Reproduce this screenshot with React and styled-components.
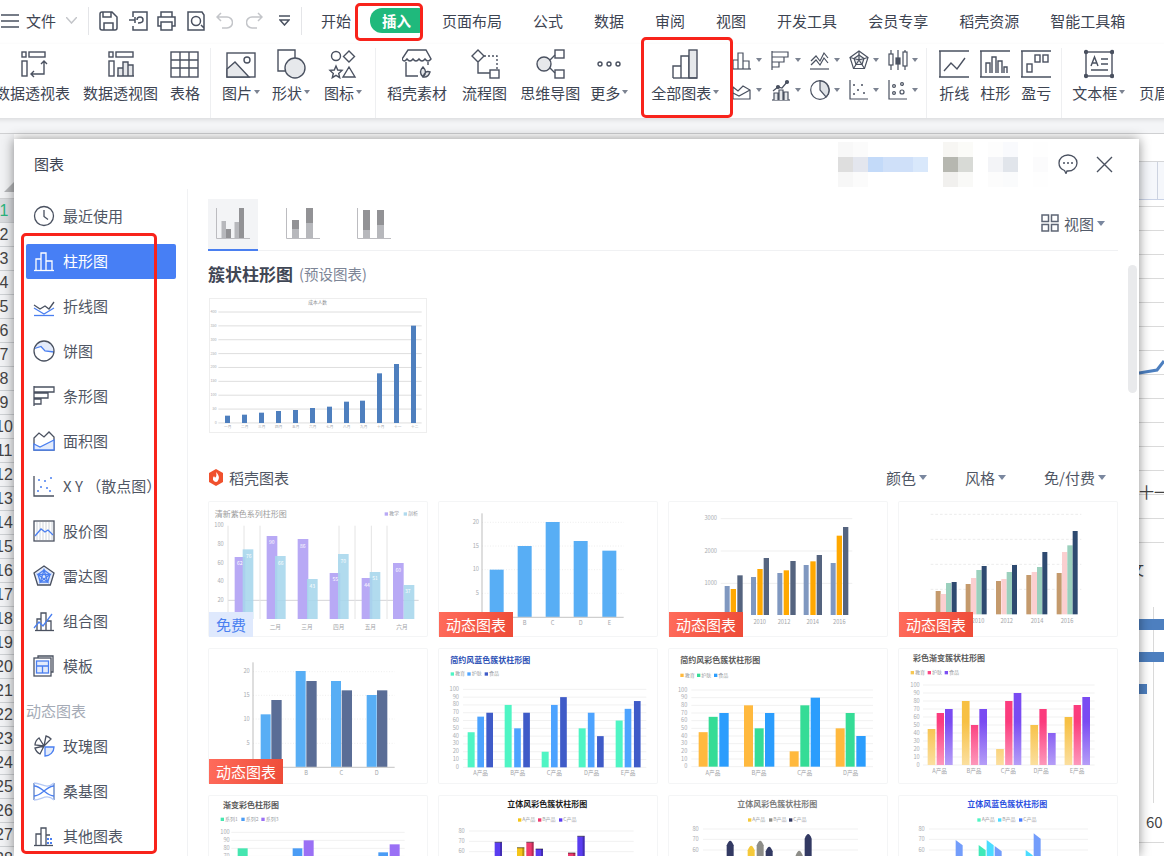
import React from 'react';
import styled, { createGlobalStyle } from 'styled-components';

const ink = '#4a5160';
const blue = '#4a7ff0';
const text = '#3d4452';

const GlobalStyle = createGlobalStyle`
  html, body {
    margin: 0;
    padding: 0;
    width: 1164px;
    height: 856px;
    overflow: hidden;
    background: white;
    font-family: "Noto Sans CJK SC", "Liberation Sans", sans-serif;
    color: ${text};
  }
  * { box-sizing: border-box; }
`;

const Page = styled.div`
  position: relative;
  width: 1164px;
  height: 856px;
  overflow: hidden;
  display: flex;
  flex-direction: column;
`;

/* ---------- top tabs ---------- */
const TabBar = styled.div`
  height: 44px;
  flex: none;
  display: flex;
  align-items: center;
  padding: 0 0 3px 1px;
  background: white;
  font-size: 15px;
  white-space: nowrap;
`;

const FileLabel = styled.span`
  margin-left: 7px;
`;

const VDivider = styled.div`
  width: 1px;
  height: ${p => p.$h || 28}px;
  background: #e4e5e8;
  flex: none;
  margin-left: ${p => p.$ml || 0}px;
`;

const QuickIcon = styled.svg`
  flex: none;
  margin-left: ${p => p.$ml}px;
  fill: none;
  stroke: ${p => p.$off ? '#c3c5c9' : ink};
  stroke-width: 1.5;
`;

const Tabs = styled.div`
  display: flex;
  align-items: center;
  gap: 31px;
  margin-left: 19px;
`;

const Tab = styled.span`
  ${p => p.$active && `
    background: #1fb97c;
    color: white;
    font-weight: 700;
    height: 25px;
    line-height: 25px;
    padding: 0 12px;
    margin: 0 -12px;
    border-radius: 12px 4px 4px 12px;
    font-size: 14.5px;
  `}
`;

/* ---------- ribbon ---------- */
const Ribbon = styled.div`
  height: 74px;
  flex: none;
  display: flex;
  background: white;
  box-shadow: 0 2px 4px rgba(0, 0, 0, .1);
  position: relative;
  z-index: 1;
  margin-left: -5px;
  width: 1180px;
`;

const Tool = styled.div`
  flex: none;
  margin-left: ${p => p.$ml || 0}px;
  display: flex;
  flex-direction: column;
  align-items: center;
  padding-top: 5px;
  font-size: 15px;
  white-space: nowrap;
`;

const ToolIcon = styled.svg`
  display: block;
  fill: none;
  stroke: ${ink};
  stroke-width: 1.4;
`;

const ToolLabel = styled.div`
  display: flex;
  align-items: center;
  height: 20px;
  margin-top: 3px;
`;

const Caret = styled.i`
  display: inline-block;
  flex: none;
  margin-left: ${p => p.$ml ?? 2}px;
  border-style: solid;
  border-width: ${p => p.$big ? '5px 4px 0' : '4px 3.5px 0'};
  border-color: ${p => p.$big ? '#7a879f' : '#7c8391'} transparent transparent;
`;

const RibbonDivider = styled.div`
  flex: none;
  width: 1px;
  height: 70px;
  margin: 4px 0 0 ${p => p.$ml}px;
  background: #eeeff1;
`;

const MiniGrid = styled.div`
  flex: none;
  width: 195px;
  margin-left: 13px;
  padding-top: 1px;
  display: grid;
  grid-template-columns: repeat(5, 39px);
  grid-auto-rows: 30px;
`;

const MiniCell = styled.div`
  display: flex;
  align-items: center;
`;

const Band = styled.div`
  height: 15px;
  flex: none;
  background: #f4f5f7;
`;

/* ---------- sheet behind the dialog ---------- */
const Sheet = styled.div`
  position: relative;
  flex: 1;
  display: flex;
  background: white;
  border-top: 1px solid #cfd0d2;
`;

const RowHeader = styled.div`
  width: 14px;
  flex: none;
  background: #f1f2f4;
`;

const Corner = styled.div`
  height: 65px;
  display: flex;
  justify-content: flex-end;
  align-items: flex-end;
  padding-bottom: 6px;
  border-bottom: 1px solid #cfd0d2;
`;

const CornerMark = styled.i`
  border-style: solid;
  border-width: 0 0 10px 10px;
  border-color: transparent transparent #b4b5b8;
`;

const RowNum = styled.div`
  height: 24px;
  padding-right: 6px;
  display: flex;
  justify-content: center;
  align-items: center;
  border-bottom: 1px solid #cdd0d3;
  font-family: "Liberation Sans", sans-serif;
  font-size: 16px;
  white-space: nowrap;
  color: ${p => p.$on ? '#2bb37c' : '#444'};
  background: ${p => p.$on ? '#d9dbde' : 'transparent'};
`;

const SheetBody = styled.div`
  flex: 1;
  display: flex;
  flex-direction: column;
`;

const ColHead = styled.div`
  height: 65px;
  flex: none;
  padding-top: 27px;
`;

const ColHeadCells = styled.div`
  height: 39px;
  background: #f5f7fb;
  border-top: 1px solid #d5d6d8;
  border-bottom: 1px solid #c9d2e6;
  background-image: linear-gradient(#cdd3e0, #cdd3e0);
  background-size: 1px 100%;
  background-position: 1143px 0;
  background-repeat: no-repeat;
`;

const GridRows = styled.div`
  height: 346px;
  flex: none;
  background-image: linear-gradient(to bottom, transparent 23px, #dadada 23px);
  background-size: 100% 24px;
  background-position: 0 8px;
`;

const Bg = styled.div`
  position: absolute;
  left: ${p => p.$x}px;
  top: ${p => p.$y - 134}px;
  width: ${p => p.$w ? `${p.$w}px` : 'auto'};
  height: ${p => p.$h ? `${p.$h}px` : 'auto'};
  background: ${p => p.$c || 'transparent'};
  font-size: 15px;
  white-space: nowrap;
  color: #444;
`;

const SheetLine = styled.svg`
  position: absolute;
  left: 1139px;
  top: 221px;
  fill: none;
`;

/* ---------- dialog ---------- */
const Dialog = styled.div`
  position: absolute;
  left: 14px;
  top: 139px;
  width: 1125px;
  height: 717px;
  z-index: 2;
  overflow: hidden;
  background: white;
`;

const DialogShadow = styled.div`
  position: absolute;
  left: 14px;
  top: 139px;
  width: 1125px;
  height: 717px;
  z-index: 2;
  box-shadow: 0 0 11px rgba(0, 0, 0, .45);
`;

const DialogHeader = styled.div`
  height: 50px;
  display: flex;
  align-items: center;
  padding: 0 26px 0 20px;
  font-size: 15px;
`;

const DialogTitle = styled.span`
  padding-bottom: 2px;
`;

const Mosaic = styled.div`
  margin-left: auto;
  display: grid;
  grid-template-columns: repeat(14, 15px);
  grid-auto-rows: 15px;
`;

const Pixel = styled.i`
  display: block;
  background: ${p => p.$c};
`;

const HeaderIcon = styled.svg`
  flex: none;
  margin-left: ${p => p.$ml}px;
  fill: none;
  stroke: ${ink};
`;

const DialogBody = styled.div`
  display: flex;
  height: 667px;
`;

const Sidebar = styled.div`
  width: 174px;
  flex: none;
  padding: 10px 0 0 12px;
  display: flex;
  flex-direction: column;
  gap: 10px;
  border-right: 1px solid #f1f2f4;
`;

const SideItem = styled.div`
  width: 150px;
  height: 35px;
  flex: none;
  display: flex;
  align-items: center;
  gap: 8px;
  padding: 0 0 2px 7px;
  border-radius: 2px;
  font-size: 15px;
  white-space: nowrap;
  color: ${p => p.$active ? 'white' : '#4f5664'};
  background: ${p => p.$active ? '#477ff5' : 'transparent'};
`;

const SideIcon = styled.svg`
  flex: none;
  fill: none;
  stroke: ${p => p.$active ? 'white' : ink};
  stroke-width: 1.3;
`;

const SideGroup = styled.div`
  height: 35px;
  flex: none;
  line-height: 33px;
  margin-bottom: -10px;
  font-size: 15px;
  color: #a5abb6;
`;

const Main = styled.div`
  flex: 1;
  min-width: 0;
  padding: 10px 21px 0 20px;
`;

const TypeTabs = styled.div`
  height: 52px;
  display: flex;
  border-bottom: 1px solid #f0f1f3;
  padding-right: 13px;
`;

const TypeTab = styled.div`
  width: 50px;
  height: 52px;
  margin-right: ${p => p.$mr || 0}px;
  padding-top: 9px;
  display: flex;
  justify-content: center;
  background: ${p => p.$active ? '#f3f4f6' : 'transparent'};
  border-bottom: 2px solid ${p => p.$active ? blue : 'transparent'};
`;

const ViewSwitch = styled.div`
  margin-left: auto;
  height: 48px;
  display: flex;
  align-items: center;
  gap: 5px;
  font-size: 15px;
  color: #535b6a;
`;

const Heading = styled.div`
  margin-top: 10px;
  height: 24px;
  display: flex;
  align-items: center;
  gap: 6px;
  font-size: 17px;
  font-weight: 700;
  color: #3f4654;
`;

const HeadingNote = styled.span`
  font-size: 14.5px;
  font-weight: 400;
  color: #7d8596;
`;

const Preview = styled.div`
  margin: 13px 0 0 1px;
  width: 218px;
  height: 135px;
  box-shadow: inset 0 0 0 1px #eeeeee;
`;

const SectionBar = styled.div`
  margin-top: 33px;
  height: 24px;
  display: flex;
  align-items: center;
  font-size: 15px;
  color: #4f5664;
  padding: 0 12px 2px 0;
`;

const SectionTitle = styled.span`
  margin-left: 5px;
  margin-right: auto;
`;

const Filter = styled.span`
  display: flex;
  align-items: center;
  margin-left: 38px;
`;

const CardGrid = styled.div`
  margin-top: 11px;
  display: grid;
  grid-template-columns: repeat(4, 220px);
  grid-auto-rows: 136px;
  column-gap: 10px;
  row-gap: 11px;
`;

const Card = styled.div`
  position: relative;
  box-shadow: inset 0 0 0 1px #f4f5f6;
  border-radius: 2px;
`;

const Badge = styled.span`
  position: absolute;
  left: 1px;
  bottom: 0;
  height: 25px;
  line-height: 25px;
  text-align: center;
  font-size: 15px;
  ${p => p.$free
    ? `width: 44px; background: #dfe9fd; color: ${blue};`
    : 'width: 74px; color: white; background: linear-gradient(100deg, #ff6b5b, #ee4c38);'}
`;

const ChartSvg = styled.svg`
  display: block;
  font-family: "Noto Sans CJK SC", "Liberation Sans", sans-serif;
`;

const Scrollbar = styled.div`
  position: absolute;
  left: 1114px;
  top: 126px;
  width: 9px;
  height: 128px;
  border-radius: 5px;
  background: #e9eaec;
`;

const Frame = styled.div`
  position: absolute;
  z-index: 3;
  left: ${p => p.$x}px;
  top: ${p => p.$y}px;
  width: ${p => p.$w}px;
  height: ${p => p.$h}px;
  border: 3px solid #f8231b;
  border-radius: 5px;
`;

/* ---------- charts ---------- */
const col = (xs, w, tops, c, shape) => xs.map((x, i) => ({ x, w, t: tops[i], c, shape }));
const range = (start, step, n) => Array.from({ length: n }, (_, i) => start + i * step);
const vals = (base, k, list) => list.map(v => base - v * k);

const Bar = ({ b, base }) => {
  const h = base - b.t;
  if (b.shape === '3d') {
    return (
      <g>
        <rect x={b.x} y={b.t} width={b.w} height={h} fill={b.c} />
        <rect x={b.x + b.w - 6} y={b.t} width={6} height={h} fill="#000" opacity=".25" />
        <rect x={b.x} y={b.t - 2} width={b.w} height={4} fill="#000" opacity=".4" />
      </g>
    );
  }
  if (b.shape === 'bullet') {
    return <path d={`M${b.x} ${base}V${b.t + 16}Q${b.x + b.w / 2} ${b.t - 12} ${b.x + b.w} ${b.t + 16}V${base}Z`} fill={b.c} />;
  }
  if (b.shape === 'slant') {
    return <path d={`M${b.x} ${base}V${b.t}L${b.x + b.w} ${b.t + 16}V${base}Z`} fill={b.c} />;
  }
  return <rect x={b.x} y={b.t} width={b.w} height={h} fill={b.c} />;
};

const Chart = ({ box, size = [220, 136], title, legend = [], yTicks = [], yx, grid, vGrid = [], axisX, bars, base, xLabels = [], xy, tag, barText = [] }) => (
  <ChartSvg width={size[0]} height={size[1]} viewBox={`${box[0]} ${box[1]} ${size[0] * 3} ${size[1] * 3}`}>
    <defs>
      <linearGradient id="gy" gradientUnits="userSpaceOnUse" x1="0" y1="230" x2="0" y2="360"><stop offset="0" stopColor="#f7c043" /><stop offset="1" stopColor="#fbdf9f" /></linearGradient>
      <linearGradient id="gp" gradientUnits="userSpaceOnUse" x1="0" y1="230" x2="0" y2="360"><stop offset="0" stopColor="#fb3c7d" /><stop offset="1" stopColor="#fd98bb" /></linearGradient>
      <linearGradient id="gv" gradientUnits="userSpaceOnUse" x1="0" y1="230" x2="0" y2="360"><stop offset="0" stopColor="#7a4bf2" /><stop offset="1" stopColor="#b59ef7" /></linearGradient>
    </defs>
    {grid && grid.ys.map(y => (
      <line key={y} x1={grid.x1} x2={grid.x2} y1={y} y2={y} stroke={grid.c || '#f1f1f1'} strokeWidth={grid.sw || 3} strokeDasharray={grid.dash} />
    ))}
    {vGrid.map(x => <line key={x} x1={x} x2={x} y1={92} y2={372} stroke="#e4e4e4" strokeWidth="3" />)}
    {axisX && <line x1={axisX[0]} x2={axisX[0]} y1={axisX[1]} y2={base} stroke="#bdbdbd" strokeWidth="3" />}
    {title && (
      <text x={title.x} y={title.y} fill={title.c} fontSize={title.fs || 24} fontWeight={title.w || 400} textAnchor={title.a || 'start'} dominantBaseline="middle">{title.t}</text>
    )}
    {legend.map(l => (
      <g key={l.x}>
        <rect x={l.x} y={l.y - 5} width="10" height="10" fill={l.c} />
        <text x={l.x + 13} y={l.y} fontSize="15" fill="#9a9da3" dominantBaseline="middle">{l.t}</text>
      </g>
    ))}
    {yTicks.map(([t, y]) => (
      <text key={t} x={yx} y={y} fontSize={tag === 'preview' ? 11 : 17} fill="#a9acb1" textAnchor="end" dominantBaseline="middle">{t}</text>
    ))}
    {bars.map((b, i) => <Bar key={i} b={b} base={base} />)}
    {barText.map(([t, x, y]) => (
      <text key={`${t}${x}`} x={x} y={y} fontSize="15" fill="white" textAnchor="middle" dominantBaseline="middle">{t}</text>
    ))}
    {xLabels.map(([t, x]) => (
      <text key={t} x={x} y={xy} fontSize={tag === 'preview' ? 11 : 17} fill="#a3a5a9" textAnchor="middle" dominantBaseline="middle">{t}</text>
    ))}
    {tag === 'axis' && <line x1={axisX[0]} x2={grid.x2} y1={base} y2={base} stroke="#cfcfcf" strokeWidth="4" />}
  </ChartSvg>
);

const ticks = (list, start, step) => list.map((t, i) => [t, start + i * step]);
const hundred = [100, 90, 80, 70, 60, 50, 40, 30, 20, 10, 0];

const previewChart = {
  box: [57, 325],
  size: [218, 135],
  title: { x: 383, y: 340, t: '成本人数', c: '#8b8d92', fs: 14, a: 'middle' },
  grid: { x1: 85, x2: 695, ys: range(367, 41.6, 9), c: '#dedede', sw: 3 },
  yTicks: ticks([400, 350, 300, 250, 200, 150, 100, 50, 0], 367, 41.6),
  yx: 80,
  tag: 'preview',
  base: 700,
  bars: col(range(105, 51, 8).concat([510, 561, 612, 663]), 15, [678, 675, 669, 664, 661, 655, 651, 636, 633, 551, 523, 408], '#4e7fbe'),
  xLabels: ['一月', '二月', '三月', '四月', '五月', '六月', '七月', '八月', '九月', '十月', '十一', '十二'].map((t, i) => [t, 113 + i * 51]),
  xy: 712,
};

const cards = [
  {
    badge: 'free',
    chart: {
      box: [25, 18],
      title: { x: 45, y: 60, t: '清新紫色系列柱形图', c: '#9c9c9c' },
      legend: [{ x: 555, y: 57, c: '#b8a9f5', t: '教学' }, { x: 612, y: 57, c: '#b0daee', t: '剖析' }],
      yTicks: ticks([100, 80, 60, 40, 20], 92, 56),
      yx: 72,
      vGrid: [85, 133, 181, 418, 466, 515, 562],
      grid: { x1: 85, x2: 657, ys: [316], c: '#d4d4d8' },
      base: 372,
      bars: [
        ...col([105, 201, 294, 390, 486, 580], 32, [186, 123, 132, 234, 249, 204], '#b8a9f5'),
        ...col([129, 226, 322, 415, 510, 612], 32, [163, 183, 252, 177, 231, 270], 'rgba(166, 214, 236, .88)'),
      ],
      barText: [['62', 120, 207], ['76', 147, 186], ['90', 216, 144], ['66', 243, 205], ['86', 309, 156], ['43', 338, 274], ['55', 407, 255], ['70', 431, 199], ['44', 502, 272], ['51', 526, 252], ['60', 596, 228], ['37', 624, 291]],
      xLabels: [['二月', 227], ['三月', 322], ['四月', 417], ['五月', 512], ['六月', 607]],
      xy: 398,
    },
  },
  {
    badge: 'dyn',
    chart: {
      box: [715, 18],
      axisX: [847, 55],
      grid: { x1: 847, x2: 1272, ys: [82, 153, 224, 295], dash: '3 5', c: '#e6e6e6', sw: 2 },
      tag: 'axis',
      yTicks: ticks([20, 15, 10, 5], 82, 71),
      yx: 838,
      base: 367,
      bars: col([870, 954, 1038, 1122, 1208], 42, [224, 153, 81, 138, 167], '#58aef5'),
      xLabels: [['B', 975], ['C', 1059], ['D', 1143], ['E', 1229]],
      xy: 386,
    },
  },
  {
    badge: 'dyn',
    chart: {
      box: [25, 18],
      grid: { x1: 183, x2: 578, ys: [71, 168, 265], c: '#efefef' },
      yTicks: ticks([3000, 2000, 1000], 71, 97),
      yx: 172,
      base: 360,
      bars: [
        ...col([195, 274, 353, 432, 513], 15, [273, 246, 234, 210, 204], '#8098c0'),
        ...col([213, 293, 372, 452, 531], 16, [282, 222, 226, 199, 122], '#ffa800'),
        ...col([233, 312, 392, 471, 550], 16, [241, 189, 198, 180, 96], '#55647f'),
      ],
      xLabels: [['2010', 300], ['2012', 373], ['2014', 459], ['2016', 539]],
      xy: 383,
    },
  },
  {
    badge: 'dyn',
    chart: {
      box: [715, 18],
      grid: { x1: 813, x2: 1265, ys: [58, 133, 208, 283], dash: '8 6', c: '#ececec' },
      base: 358,
      bars: [
        ...col([828, 918, 1009, 1100, 1191], 15, [288, 267, 258, 240, 234], '#c49a6c'),
        ...col([843, 934, 1025, 1116, 1207], 16, [297, 249, 252, 231, 171], '#fbcfd0'),
        ...col([859, 950, 1041, 1132, 1223], 16, [264, 225, 231, 216, 151], '#9bd0bd'),
        ...col([876, 966, 1057, 1148, 1239], 15, [261, 213, 210, 171, 108], '#2e4a70'),
      ],
      xLabels: [['2010', 955], ['2012', 1041], ['2014', 1132], ['2016', 1222]],
      xy: 380,
    },
  },
  {
    badge: 'dyn',
    chart: {
      box: [25, 9],
      axisX: [160, 52],
      grid: { x1: 160, x2: 585, ys: [80, 151, 222, 295], dash: '3 5', c: '#e6e6e6', sw: 2 },
      tag: 'axis',
      yTicks: ticks([20, 15, 10, 5], 80, 71.5),
      yx: 150,
      base: 367,
      bars: [
        ...col([183, 288, 394, 501], 30, [208, 78, 108, 150], '#58aef5'),
        ...col([215, 320, 426, 532], 31, [165, 108, 136, 136], '#5a6d96'),
      ],
      xLabels: [['B', 319], ['C', 425], ['D', 531]],
      xy: 386,
    },
  },
  {
    chart: {
      box: [715, 9],
      title: { x: 752, y: 47, t: '简约风蓝色簇状柱形图', c: '#2b4fb5', w: 700 },
      legend: [{ x: 753, y: 87, c: '#4ff5c4', t: '教育' }, { x: 803, y: 87, c: '#4da3ff', t: '护肤' }, { x: 855, y: 87, c: '#3f5bc8', t: '食品' }],
      grid: { x1: 790, x2: 1340, ys: range(133, 23.4, 11) },
      yTicks: ticks(hundred, 133, 23.4),
      yx: 778,
      base: 367,
      bars: [
        ...col(range(804, 111, 5), 21, vals(367, 2.34, [45, 80, 20, 50, 60]), '#4ff5c4'),
        ...col(range(833, 110.5, 5), 20, vals(367, 2.34, [65, 50, 80, 70, 75]), '#4da3ff'),
        ...col(range(860, 110.7, 5), 20, vals(367, 2.34, [70, 70, 90, 40, 85]), '#3f5bc8'),
      ],
      xLabels: [['A产品', 843], ['B产品', 954], ['C产品', 1064], ['D产品', 1176], ['E产品', 1285]],
      xy: 385,
    },
  },
  {
    chart: {
      box: [25, 9],
      title: { x: 62, y: 47, t: '简约风彩色簇状柱形图', c: '#5a5a5a', w: 700 },
      legend: [{ x: 62, y: 91, c: '#ffb93e', t: '教育' }, { x: 112, y: 91, c: '#35dc96', t: '护肤' }, { x: 163, y: 91, c: '#2b9dfd', t: '食品' }],
      grid: { x1: 95, x2: 640, ys: range(135, 23, 11) },
      yTicks: ticks(hundred, 135, 23),
      yx: 83,
      base: 365,
      bars: [
        ...col([117, 253, 390, 528], 27, vals(365, 2.3, [45, 80, 20, 50]), '#ffb93e'),
        ...col([147, 285, 422, 558], 27, vals(365, 2.3, [65, 50, 80, 70]), '#35dc96'),
        ...col([179, 316, 453, 590], 28, vals(365, 2.3, [70, 70, 90, 40]), '#2b9dfd'),
      ],
      xLabels: [['A产品', 160], ['B产品', 298], ['C产品', 435], ['D产品', 573]],
      xy: 384,
    },
  },
  {
    chart: {
      box: [715, 9],
      title: { x: 760, y: 42, t: '彩色渐变簇状柱形图', c: '#5a5a5a', w: 700 },
      legend: [{ x: 753, y: 83, c: '#f7c854', t: '教育' }, { x: 804, y: 83, c: '#fb4684', t: '护肤' }, { x: 855, y: 83, c: '#7c50f3', t: '食品' }],
      grid: { x1: 790, x2: 1305, ys: range(120, 24, 11) },
      yTicks: ticks(hundred, 120, 24),
      yx: 780,
      base: 360,
      bars: [
        ...col(range(804, 102.7, 5), 23, vals(360, 2.4, [45, 80, 20, 50, 60]), 'url(#gy)'),
        ...col(range(831, 102.7, 5), 22, vals(360, 2.4, [65, 50, 80, 70, 75]), 'url(#gp)'),
        ...col(range(856, 103, 5), 23, vals(360, 2.4, [70, 70, 90, 40, 85]), 'url(#gv)'),
      ],
      xLabels: [['A产品', 840], ['B产品', 943], ['C产品', 1046], ['D产品', 1144], ['E产品', 1252]],
      xy: 378,
    },
  },
  {
    chart: {
      box: [25, 450],
      title: { x: 70, y: 483, t: '渐变彩色柱形图', c: '#5a5a5a', w: 700 },
      legend: [{ x: 63, y: 523, c: '#45e6b0', t: '系列1' }, { x: 125, y: 523, c: '#4a9cf5', t: '系列2' }, { x: 185, y: 523, c: '#9a70f5', t: '系列3' }],
      grid: { x1: 95, x2: 615, ys: [562, 586, 610, 634] },
      yTicks: ticks([100, 90, 80, 70], 562, 24),
      yx: 90,
      base: 900,
      bars: [
        ...col([114], 30, [610], '#45e6b0'),
        ...col([279, 536], 29, [610, 622], '#4a9cf5'),
        ...col([312, 570], 30, [586, 598], '#9a70f5'),
      ],
    },
  },
  {
    chart: {
      box: [715, 450],
      title: { x: 1043, y: 480, t: '立体风彩色簇状柱形图', c: '#1a1a1a', w: 700, a: 'middle' },
      legend: [{ x: 955, y: 525, c: '#f5c518', t: 'A产品' }, { x: 1015, y: 525, c: '#ee3a6e', t: 'B产品' }, { x: 1078, y: 525, c: '#5a3df0', t: 'C产品' }],
      grid: { x1: 808, x2: 1302, ys: [558, 589, 620, 651] },
      yTicks: ticks([80, 70, 60], 558, 31),
      yx: 795,
      base: 900,
      bars: [
        ...col([885, 1008, 1133], 22, [592, 612, 574], '#5a3df0', '3d'),
        ...col([952], 22, [608], '#f5c518', '3d'),
        ...col([980, 1105], 22, [592, 624], '#ee3a6e', '3d'),
      ],
    },
  },
  {
    chart: {
      box: [25, 450],
      title: { x: 353, y: 480, t: '立体风彩色簇状柱形图', c: '#7c7c7c', w: 700, a: 'middle' },
      legend: [{ x: 265, y: 525, c: '#f5c93a', t: 'A产品' }, { x: 328, y: 525, c: '#8d8d88', t: 'B产品' }, { x: 388, y: 525, c: '#333a63', t: 'C产品' }],
      grid: { x1: 130, x2: 595, ys: [552, 583, 615, 647] },
      yTicks: ticks([80, 70, 60], 552, 31.5),
      yx: 117,
      base: 900,
      bars: [
        ...col([201, 318, 435], 21, [585, 603, 565], '#333a63', 'bullet'),
        ...col([264], 21, [600], '#f5c93a', 'bullet'),
        ...col([291, 408], 21, [585, 615], '#8d8d88', 'bullet'),
      ],
    },
  },
  {
    chart: {
      box: [715, 450],
      title: { x: 1043, y: 480, t: '立体风蓝色簇状柱形图', c: '#2b4fe0', w: 700, a: 'middle' },
      legend: [{ x: 953, y: 525, c: '#4ff5c4', t: 'A产品' }, { x: 1015, y: 525, c: '#4adcff', t: 'B产品' }, { x: 1078, y: 525, c: '#4a7dff', t: 'C产品' }],
      grid: { x1: 808, x2: 1285, ys: [552, 583, 615, 647] },
      yTicks: ticks([80, 70, 60], 552, 31.5),
      yx: 795,
      base: 900,
      bars: [
        ...col([888, 1005, 1122], 21, [585, 603, 565], '#739dfb', 'slant'),
        ...col([957], 21, [600], '#3fe9b8', 'slant'),
        ...col([981, 1098], 21, [585, 615], '#4adcff', 'slant'),
      ],
    },
  },
];

/* ---------- icons ---------- */
const Big = ({ w = 30, children }) => <ToolIcon width={w} height="30" viewBox={`0 0 ${w} 30`}>{children}</ToolIcon>;

const Mini = ({ children }) => (
  <ToolIcon width="20" height="22" viewBox="0 0 20 22" style={{ strokeWidth: 1.2, flex: 'none' }}>{children}</ToolIcon>
);

const miniIcons = [
  <><path d="M0 20h19" /><path d="M1 20v-9h5M6 20V4h5v16M11 20v-8h6v8" /></>,
  <><path d="M1 2v19" /><path d="M1 3h16v5H1M1 8h12v5H1M1 13h7v5H1" /></>,
  <><path d="M0 20h19" /><path d="M1 12l5-5 4 5 4-8 4 5" /><path d="M1 16l5-5 4 5 4-7 4 5" /></>,
  <><path d="M10 2l9 6.500-3.500 11h-11L1 8.500z" /><path d="M10 6l5 3.500-2 6H7l-2-6z" fill="#e6e8eb" /><path d="M10 2v9M1 8.500l9 2.500 9-2.500M4.500 19.500L10 11l5.500 8.500" /></>,
  <><path d="M3 1v20M10 1v20M17 1v20" /><rect x="1" y="5" width="4" height="11" fill="white" /><rect x="8" y="9" width="4" height="6" fill={ink} /><rect x="15" y="3" width="4" height="14" fill="white" /></>,
  <><path d="M1 8l5 4 5-5 7 4v9H1z" /><path d="M1 14l6 3 11-6" /></>,
  <><path d="M1 21h18" /><path d="M3 21v-7h4v7M8 21v-10h4v10M13 21v-8h4v8" fill="#e6e8eb" /><path d="M2 12l5-4 4 1 5-6" /><circle cx="16" cy="3" r="1.500" fill={ink} /><circle cx="7" cy="8" r="1.500" fill={ink} /></>,
  <><circle cx="10" cy="11" r="9.300" /><path d="M10 2v9l6 7a9.300 9.300 0 0 0-6-16z" fill="#dfe2e6" /></>,
  <><path d="M1 1v19h18" /><g fill={ink} stroke="none"><circle cx="5" cy="6" r="1" /><circle cx="9" cy="11" r="1" /><circle cx="5" cy="15" r="1" /><circle cx="13" cy="6" r="1" /><circle cx="15" cy="14" r="1" /></g></>,
  <><path d="M1 1v19h18" /><circle cx="6" cy="7" r="1.400" /><circle cx="14" cy="5" r="1.400" /><circle cx="6" cy="14" r="1.400" /><circle cx="14" cy="13" r="2" /></>,
];

const side = {
  recent: <><circle cx="11" cy="11" r="9.500" /><path d="M11 5v6.500l4 3" /></>,
  column: <><path d="M1 20.500h20" /><path d="M3 20V9h5v11M8 20V3h5v17M13 20v-9h6v9" /></>,
  line: <><path d="M1 10l6 4 5-3 4 3 5-7" /><path d="M1 13l10 6 10-6" stroke={blue} /><path d="M1 20.500h20" stroke={blue} /></>,
  pie: <><path d="M1.500 8.500l6.500-2 4 4.500 9 1a10 10 0 0 0-19.500-3.500z" fill="#e3ebfb" stroke="none" /><path d="M1.500 8.500l6.500-2 4 4.500 9 1" stroke={blue} /><circle cx="11" cy="11" r="10" /></>,
  bar: <><path d="M1 1v20" /><path d="M1 2h20v5H1M1 8h14v5H1M1 14h7v5H1" /></>,
  area: <><path d="M1 8l5-5 5 4 5-5 5 5v13H1z" /><path d="M1 14l6 3 14-7v10H1z" fill="#e3ebfb" stroke={blue} /></>,
  scatter: <><path d="M1 1v20h20" /><g fill={blue} stroke="none"><circle cx="6" cy="5" r="1" /><circle cx="12" cy="6" r="1" /><circle cx="18" cy="3" r="1" /><circle cx="8" cy="12" r="1" /><circle cx="14" cy="13" r="1" /><circle cx="5" cy="16" r="1" /><circle cx="17" cy="16" r="1" /></g></>,
  stock: <><rect x="1" y="1" width="20" height="20" /><path d="M4 2v18M7 2v18M10 2v18M13 2v18M16 2v18M19 2v18" stroke="#d9dde4" /><path d="M2 16l6-7 4 3 3-2 5 5" stroke={blue} /></>,
  radar: <><path d="M11 1l10 7-3.700 12H4.700L1 8z" fill="#e3ebfb" /><path d="M11 5l6 4.500-2.300 7.500H7.300L5 9.500z" stroke={blue} /><path d="M11 5l3.700 12L5 9.500h12L7.300 17z" stroke={blue} /></>,
  combo: <><path d="M2 20.500h19" /><path d="M4 20V9h4v11M8 20V3h5v17M13 20v-9h5v9" /><path d="M1 18l5-6 4 4 9-12" stroke={blue} /></>,
  template: <><path d="M5 3V1h15v16h-2" /><rect x="1" y="3" width="17" height="18" /><rect x="3.500" y="6" width="12" height="12" fill="#e3ebfb" stroke={blue} /><path d="M3.500 11h12M9.500 11v7" stroke={blue} /></>,
  rose: <><path d="M11 11L6 3a9 9 0 0 0-4 7zM11 11l2-10a9 9 0 0 1 5 3zM11 11L2 13a9 9 0 0 0 5 6z" /><path d="M12 12h9a9 9 0 0 1-9 9z" fill="#e3ebfb" stroke={blue} /></>,
  sankey: <><path d="M1 3v17M21 3v17" stroke="#5b7fc4" /><path d="M1 6c8 0 12 10 20 10M1 16c8 0 12-10 20-10" stroke={blue} /><path d="M1 3c8 0 12 7 20 0M1 20c8 0 12-7 20 0" stroke="#b5c9f5" /></>,
  other: <><path d="M1 20.500h19" /><path d="M3 20V9h5v11M8 20V3h5v17M13 20V10h4" /><g fill={blue} stroke="none"><rect x="14" y="13" width="2" height="2" /><rect x="17" y="13" width="2" height="2" /><rect x="14" y="17" width="2" height="2" /><rect x="17" y="17" width="2" height="2" /></g></>,
};

const sideItems = [
  ['recent', '最近使用'], ['column', '柱形图', true], ['line', '折线图'], ['pie', '饼图'], ['bar', '条形图'], ['area', '面积图'],
  ['scatter', 'X Y （散点图）'], ['stock', '股价图'], ['radar', '雷达图'], ['combo', '组合图'], ['template', '模板'],
];
const sideItems2 = [['rose', '玫瑰图'], ['sankey', '桑基图'], ['other', '其他图表']];

const SideRow = ({ icon, label, active }) => (
  <SideItem $active={active}>
    <SideIcon $active={active} width="22" height="22" viewBox="0 0 22 22">{side[icon]}</SideIcon>
    {label}
  </SideItem>
);

const TypeIcon = ({ bars }) => (
  <svg width="34" height="32" viewBox="0 0 34 32">
    <path d="M.5 0v30.500H34" fill="none" stroke="#bcbcc0" strokeWidth="1" />
    {bars.map(([x, y, w, h, c]) => <rect key={`${x}${y}`} x={x} y={y} width={w} height={h} fill={c} />)}
  </svg>
);

const L = '#b7b8bc';
const D = '#929295';

const mosaicRows = [
  ['#f8f8f8', '#fbfbfb', '#fff', '#fff', '#fff', '#fff', '#fff', '#f7f6f3', '#fbfbf8', '#fff', '#fdfdfd', '#f9fafd', '#fff', '#fefefe'],
  ['#dedede', '#e3e6ee', '#c3daf9', '#cfe0f9', '#cfe0f9', '#d9e8fb', '#fff', '#b6b7b0', '#d8dad6', '#fff', '#f3f4f7', '#e1e5eb', '#fff', '#fbfbfc'],
  ['#f7f7f7', '#fbfbfb', '#fff', '#fff', '#fff', '#fff', '#fff', '#f1f0ee', '#f9f9f7', '#fff', '#fcfcfc', '#fafbfc', '#fff', '#fefefe'],
];

const rowNumbers = Array.from({ length: 28 }, (_, i) => i + 1);

export default function App() {
  return (
    <Page>
      <GlobalStyle />
      <TabBar>
        <svg width="18" height="14" viewBox="0 0 18 14" fill="none" stroke={ink} strokeWidth="1.4"><path d="M0 1h18M0 7h18M0 13h18" /></svg>
        <FileLabel>文件</FileLabel>
        <QuickIcon $off $ml={10} width="11" height="7" viewBox="0 0 11 7"><path d="M0 0l5.500 6L11 0" /></QuickIcon>
        <VDivider $ml={11} />
        <QuickIcon $ml={10} width="19" height="20" viewBox="0 0 19 20"><path d="M1 3q0-2 2-2h10l5 5v11q0 2-2 2H3q-2 0-2-2zM4 1v5h8V1M5 19v-7h9v7" /></QuickIcon>
        <QuickIcon $ml={11} width="19" height="20" viewBox="0 0 19 20"><path d="M4 6V1h14v18H4v-4M0 9h6M6 6v6M9 12q5 0 5-3t-3-3-3 3" /></QuickIcon>
        <QuickIcon $ml={9} width="19" height="20" viewBox="0 0 19 20"><path d="M4 6V1h11v5M4 15H1V6h17v9h-3M4 11h11v8H4z" /></QuickIcon>
        <QuickIcon $ml={11} width="18" height="20" viewBox="0 0 18 20"><path d="M15 1H1v18h16V4zM14 14l3 3" /><circle cx="9" cy="10" r="4.500" /></QuickIcon>
        <QuickIcon $off $ml={11} width="17" height="17" viewBox="0 0 17 17"><path d="M5 1L1 5l4 4M1 5h10a5 5 0 0 1 0 11H6" /></QuickIcon>
        <QuickIcon $off $ml={13} width="17" height="17" viewBox="0 0 17 17"><path d="M12 1l4 4-4 4M16 5H6a5 5 0 0 0 0 11h5" /></QuickIcon>
        <QuickIcon $ml={16} width="11" height="11" viewBox="0 0 11 11"><path d="M0 1h11M1 5l4.500 5L10 5z" /></QuickIcon>
        <VDivider $ml={11} />
        <Tabs>
          <Tab>开始</Tab>
          <Tab $active>插入</Tab>
          <Tab>页面布局</Tab>
          <Tab>公式</Tab>
          <Tab>数据</Tab>
          <Tab>审阅</Tab>
          <Tab>视图</Tab>
          <Tab>开发工具</Tab>
          <Tab>会员专享</Tab>
          <Tab>稻壳资源</Tab>
          <Tab>智能工具箱</Tab>
        </Tabs>
      </TabBar>

      <Ribbon>
        <Tool $ml={0}>
          <Big><rect x="4" y="3" width="4" height="5" /><rect x="11" y="3" width="16" height="5" /><rect x="4" y="12" width="5" height="15" /><path d="M26 12v13H13M23 15l3-3 3 3M16 22l-3 3 3 3" /></Big>
          <ToolLabel>数据透视表</ToolLabel>
        </Tool>
        <Tool $ml={13}>
          <Big><rect x="3" y="3" width="4" height="5" /><rect x="10" y="3" width="17" height="5" /><rect x="3" y="12" width="5" height="15" /><path d="M12 27v-8h5v8M17 27V13h5v14M22 27v-11h5v11M11 27h17" fill="#e6e8eb" /></Big>
          <ToolLabel>数据透视图</ToolLabel>
        </Tool>
        <Tool $ml={12}>
          <Big><rect x="1" y="3" width="27" height="25" /><path d="M1 11h27M1 19h27M10 3v25M19 3v25" /></Big>
          <ToolLabel>表格</ToolLabel>
        </Tool>
        <RibbonDivider $ml={10} />
        <Tool $ml={11}>
          <Big><rect x="1" y="4" width="28" height="24" /><path d="M1 20l8-7 14 15H1z" fill="#e6e8eb" /><circle cx="21" cy="11" r="3" /></Big>
          <ToolLabel>图片<Caret /></ToolLabel>
        </Tool>
        <Tool $ml={12}>
          <Big><path d="M19 11V1H2v21h9" /><circle cx="19" cy="19" r="10" fill="#e6e8eb" /></Big>
          <ToolLabel>形状<Caret /></ToolLabel>
        </Tool>
        <Tool $ml={14}>
          <Big><circle cx="8" cy="7" r="4.500" /><path d="M21 2l5.500 5.500-5.500 5.500-5.500-5.500zM8 17l1.700 4 4.300.4-3.300 3 1 4.300-3.700-2.300-3.700 2.300 1-4.300-3.300-3 4.300-.4zM21 18l6 10H15z" /></Big>
          <ToolLabel>图标<Caret /></ToolLabel>
        </Tool>
        <RibbonDivider $ml={13} />
        <Tool $ml={11}>
          <Big><path d="M6 1h18l5 9q-3 4-6 0-3 4-6 0-3 4-6 0-3 4-6 0-3 4-5 0zM4 13v14h12M26 13v3" /><path d="M21 28q-5-5 0-10 5 5 0 10zM21 28q5 1 7-5-5-2-7 5z" fill="#e6e8eb" /></Big>
          <ToolLabel>稻壳素材</ToolLabel>
        </Tool>
        <Tool $ml={15}>
          <Big><path d="M8 1l6 6-6 6-6-6zM8 13v11h12" /><path d="M14 7h13v14" strokeDasharray="2 2" /><rect x="20" y="21" width="9" height="8" /></Big>
          <ToolLabel>流程图</ToolLabel>
        </Tool>
        <Tool $ml={13}>
          <Big><circle cx="9" cy="15" r="7" fill="#e6e8eb" /><path d="M15 11l5-5M15 19l5 5" /><rect x="20" y="1" width="9" height="8" /><rect x="20" y="21" width="9" height="8" /></Big>
          <ToolLabel>思维导图</ToolLabel>
        </Tool>
        <Tool $ml={10}>
          <Big w={24}><circle cx="3" cy="15" r="2" /><circle cx="12" cy="15" r="2" /><circle cx="21" cy="15" r="2" /></Big>
          <ToolLabel>更多<Caret /></ToolLabel>
        </Tool>
        <Tool $ml={23}>
          <Big w={26}><path d="M1 29V17h8v12M9 29V7h8v22" /><rect x="17" y="1" width="8" height="28" fill="#e6e8eb" /><path d="M1 29h24" /></Big>
          <ToolLabel>全部图表<Caret /></ToolLabel>
        </Tool>
        <MiniGrid>
          {miniIcons.map((icon, i) => (
            <MiniCell key={i}>
              <Mini>{icon}</Mini>
              <Caret $ml={4} />
            </MiniCell>
          ))}
        </MiniGrid>
        <RibbonDivider $ml={-1} />
        <Tool $ml={12}>
          <Big><path d="M0 2h30M0 28h30M1 2v26" /><path d="M5 22l7-8 6 6 8-11" /></Big>
          <ToolLabel>折线</ToolLabel>
        </Tool>
        <Tool $ml={11}>
          <Big><path d="M0 2h30M0 28h30M1 2v26" /><path d="M6 24V14h4v10M12 24V8h4v16M18 24V12h4v12M24 24v-6h3v6" /></Big>
          <ToolLabel>柱形</ToolLabel>
        </Tool>
        <Tool $ml={11}>
          <Big><path d="M0 2h30M0 28h30M1 2v26" /><rect x="6" y="15" width="5" height="8" /><rect x="14" y="6" width="5" height="7" /><rect x="22" y="6" width="5" height="7" /></Big>
          <ToolLabel>盈亏</ToolLabel>
        </Tool>
        <RibbonDivider $ml={10} />
        <Tool $ml={10}>
          <Big><rect x="2" y="3" width="26" height="24" /><path d="M7 17l3.500-9L14 17M8.500 14h4M17 10h7M17 15h7M7 21h17" /><g fill={ink}><circle cx="2" cy="3" r="1.500" /><circle cx="28" cy="3" r="1.500" /><circle cx="2" cy="27" r="1.500" /><circle cx="28" cy="27" r="1.500" /></g></Big>
          <ToolLabel>文本框<Caret /></ToolLabel>
        </Tool>
        <Tool $ml={14}>
          <Big><rect x="19" y="2" width="20" height="26" /><path d="M19 9h20M24 5h8" /></Big>
          <ToolLabel>页眉页脚</ToolLabel>
        </Tool>
      </Ribbon>

      <Band />

      <Sheet>
        <RowHeader>
          <Corner><CornerMark /></Corner>
          {rowNumbers.map(n => <RowNum key={n} $on={n === 1}>{n}</RowNum>)}
        </RowHeader>
        <SheetBody>
          <ColHead><ColHeadCells /></ColHead>
          <GridRows />
        </SheetBody>
        <SheetLine width="25" height="30" viewBox="0 0 25 30">
          <path d="M0 18l18-3 7-9" stroke="#4d7fbf" strokeWidth="3" />
        </SheetLine>
        <Bg $x={1139} $y={481}>十一</Bg>
        <Bg $x={1129} $y={558}>文</Bg>
        <Bg $x={1153} $y={607} $w={1} $h={196} $c="#d9d9d9" />
        <Bg $x={1139} $y={619} $w={25} $h={11} $c="#4d7fbf" />
        <Bg $x={1139} $y={652} $w={25} $h={10} $c="#4d7fbf" />
        <Bg $x={1139} $y={684} $w={8} $h={10} $c="#4d7fbf" />
        <Bg $x={1146} $y={811}>60</Bg>
        <Bg $x={1139} $y={842} $w={25} $h={1} $c="#d9d9d9" />
      </Sheet>

      <DialogShadow />
      <Dialog>
        <DialogHeader>
          <DialogTitle>图表</DialogTitle>
          <Mosaic>
            {mosaicRows.flat().map((c, i) => <Pixel key={i} $c={c} />)}
          </Mosaic>
          <HeaderIcon $ml={10} width="20" height="20" viewBox="0 0 20 20" strokeWidth="1.3">
            <path d="M10 1c5 0 9 3.600 9 8s-4 8-9 8l-1 0-1 2.500-1.500-3C3.500 15.500 1 12.600 1 9c0-4.400 4-8 9-8z" />
            <g fill={ink} stroke="none"><circle cx="6" cy="9" r="1" /><circle cx="10" cy="9" r="1" /><circle cx="14" cy="9" r="1" /></g>
          </HeaderIcon>
          <HeaderIcon $ml={18} width="17" height="17" viewBox="0 0 17 17" strokeWidth="1.4">
            <path d="M1 1l15 15M16 1L1 16" />
          </HeaderIcon>
        </DialogHeader>
        <DialogBody>
          <Sidebar>
            {sideItems.map(([icon, label, active]) => <SideRow key={icon} icon={icon} label={label} active={active} />)}
            <SideGroup>动态图表</SideGroup>
            {sideItems2.map(([icon, label]) => <SideRow key={icon} icon={icon} label={label} />)}
          </Sidebar>
          <Main>
            <TypeTabs>
              <TypeTab $active $mr={20}>
                <TypeIcon bars={[[5.500, 13, 4.500, 17, L], [10, 21, 5, 9, D], [18.500, 14, 4.500, 16, L], [23, 0, 5, 30, D]]} />
              </TypeTab>
              <TypeTab $mr={21}>
                <TypeIcon bars={[[6, 12, 7, 9, D], [6, 21, 7, 9, L], [20, 0, 7, 15, D], [20, 15, 7, 15, L]]} />
              </TypeTab>
              <TypeTab>
                <TypeIcon bars={[[6, 2, 7, 20, D], [6, 22, 7, 8, L], [20, 2, 7, 15, D], [20, 17, 7, 13, L]]} />
              </TypeTab>
              <ViewSwitch>
                <svg width="18" height="18" viewBox="0 0 18 18" fill="none" stroke="#5e6675" strokeWidth="1.5">
                  <rect x="1" y="1" width="6.500" height="6.500" /><rect x="10.500" y="1" width="6.500" height="6.500" /><rect x="1" y="10.500" width="6.500" height="6.500" /><rect x="10.500" y="10.500" width="6.500" height="6.500" />
                </svg>
                视图
                <Caret $big $ml={-2} />
              </ViewSwitch>
            </TypeTabs>
            <Heading>簇状柱形图<HeadingNote>(预设图表)</HeadingNote></Heading>
            <Preview><Chart {...previewChart} /></Preview>
            <SectionBar>
              <svg width="16" height="17" viewBox="0 0 16 17">
                <path d="M8 0l7 4v9l-7 4-7-4V4z" fill="#f0512d" />
                <path d="M8 3q4 4 2.500 7.500Q9.500 13 8 13t-3-2q-.5-2.500 1-4 .5 1.500 1.500 1.500Q9 7 8 3z" fill="white" />
              </svg>
              <SectionTitle>稻壳图表</SectionTitle>
              <Filter>颜色<Caret $big $ml={3} /></Filter>
              <Filter>风格<Caret $big $ml={3} /></Filter>
              <Filter>免/付费<Caret $big $ml={3} /></Filter>
            </SectionBar>
            <CardGrid>
              {cards.map((card, i) => (
                <Card key={i}>
                  <Chart {...card.chart} />
                  {card.badge === 'free' && <Badge $free>免费</Badge>}
                  {card.badge === 'dyn' && <Badge>动态图表</Badge>}
                </Card>
              ))}
            </CardGrid>
          </Main>
        </DialogBody>
        <Scrollbar />
      </Dialog>

      <Frame $x={355} $y={3} $w={68} $h={38} />
      <Frame $x={641} $y={37} $w={92} $h={81} />
      <Frame $x={21} $y={233} $w={136} $h={621} />
    </Page>
  );
}
